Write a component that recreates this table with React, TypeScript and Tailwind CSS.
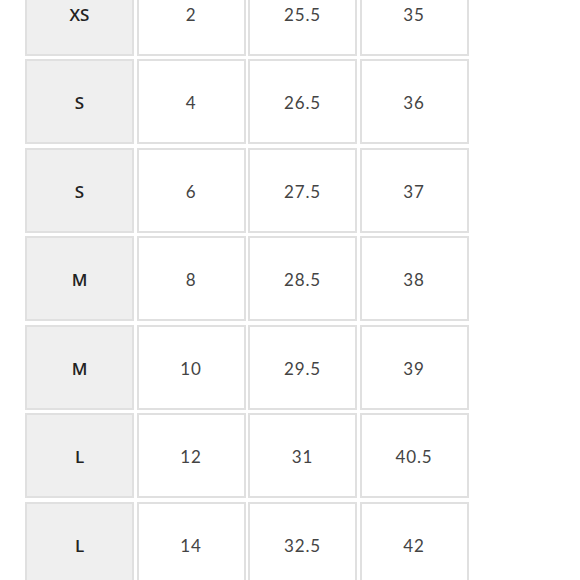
import React from 'react';

const rows = [
  { size: 'XS', us: '2', waist: '25.5', hip: '35' },
  { size: 'S', us: '4', waist: '26.5', hip: '36' },
  { size: 'S', us: '6', waist: '27.5', hip: '37' },
  { size: 'M', us: '8', waist: '28.5', hip: '38' },
  { size: 'M', us: '10', waist: '29.5', hip: '39' },
  { size: 'L', us: '12', waist: '31', hip: '40.5' },
  { size: 'L', us: '14', waist: '32.5', hip: '42' },
];

const App = () => {
  return (
    <div className="w-[580px] h-[580px] overflow-hidden bg-white">
      <div className="ml-[25px] mt-[-29.5px] grid grid-cols-[repeat(4,109px)] auto-rows-[85px] gap-x-[2.5px] gap-y-[3.5px]">
        {rows.map((row, i) => (
          <React.Fragment key={i}>
            <div className="flex items-center justify-center pt-[3px] bg-[#efefef] border-2 border-[#e0e0e0] text-[17px] font-semibold text-[#222] font-['Open_Sans',sans-serif]">
              {row.size}
            </div>
            {[row.us, row.waist, row.hip].map((val, j) => (
              <div
                key={j}
                className="flex items-center justify-center pt-[3px] bg-white border-2 border-[#e0e0e0] text-[17px] tracking-[0.8px] text-[#444] font-['Lato',sans-serif]"
              >
                {val}
              </div>
            ))}
          </React.Fragment>
        ))}
      </div>
    </div>
  );
};

export default App;
